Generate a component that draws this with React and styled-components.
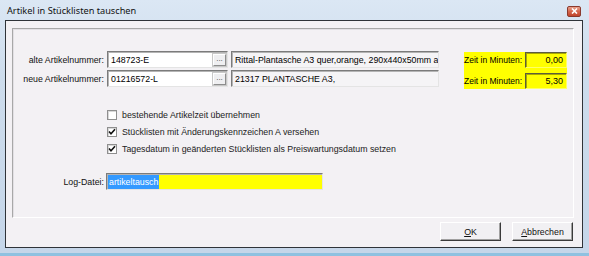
import styled, { createGlobalStyle } from "styled-components";

const GlobalStyle = createGlobalStyle`
  html, body {
    margin: 0;
    padding: 0;
    background: #c8d8ea;
  }
  * {
    box-sizing: border-box;
  }
`;

export default function App() {
  return (
    <Window>
      <GlobalStyle />
      <TitleBar>
        <Title>Artikel in Stücklisten tauschen</Title>
        <CloseButton>
          <svg width="7" height="6" viewBox="0 0 7 6">
            <path d="M1 0.5 L6 5.5 M6 0.5 L1 5.5" stroke="#fff" strokeWidth="1.6" />
          </svg>
        </CloseButton>
      </TitleBar>

      <Client>
        <Panel>
          <TopSection>
            <ArticleGrid>
              <Label>alte Artikelnummer:</Label>
              <EditField>
                <span>148723-E</span>
                <DotsButton>...</DotsButton>
              </EditField>
              <Description>Rittal-Plantasche A3 quer,orange, 290x440x50mm a</Description>

              <Label>neue Artikelnummer:</Label>
              <EditField>
                <span>01216572-L</span>
                <DotsButton>...</DotsButton>
              </EditField>
              <Description>21317 PLANTASCHE A3,</Description>
            </ArticleGrid>

            <TimeBox>
              <TimeRow>
                <span>Zeit in Minuten:</span>
                <TimeValue>0,00</TimeValue>
              </TimeRow>
              <TimeRow>
                <span>Zeit in Minuten:</span>
                <TimeValue>5,30</TimeValue>
              </TimeRow>
            </TimeBox>
          </TopSection>

          <CheckList>
            <CheckRow>
              <CheckBox />
              bestehende Artikelzeit übernehmen
            </CheckRow>
            <CheckRow>
              <CheckBox>
                <CheckMark />
              </CheckBox>
              Stücklisten mit Änderungskennzeichen A versehen
            </CheckRow>
            <CheckRow>
              <CheckBox>
                <CheckMark />
              </CheckBox>
              Tagesdatum in geänderten Stücklisten als Preiswartungsdatum setzen
            </CheckRow>
          </CheckList>

          <LogRow>
            <Label>Log-Datei:</Label>
            <LogField>
              <Selected>artikeltausch</Selected>
            </LogField>
          </LogRow>
        </Panel>

        <Footer>
          <DialogButton>
            <u>O</u>K
          </DialogButton>
          <DialogButton>
            <u>A</u>bbrechen
          </DialogButton>
        </Footer>
      </Client>
    </Window>
  );
}

function CheckMark() {
  return (
    <svg width="8" height="8" viewBox="0 0 8 8">
      <path d="M1 3.5 L3 5.8 L7 1.2" stroke="#111" strokeWidth="1.6" fill="none" />
    </svg>
  );
}

const Window = styled.div`
  width: 589px;
  height: 256px;
  display: flex;
  flex-direction: column;
  padding: 0 6px 5px 5px;
  background: linear-gradient(180deg, #dbe7f4 0%, #cddcec 30%, #c5d6e9 100%);
  border-bottom: 3px solid #8fc1e0;
  font-family: "Liberation Sans", Arial, sans-serif;
  font-size: 8.8px;
  color: #000;
`;

const TitleBar = styled.div`
  height: 20px;
  display: flex;
  align-items: center;
  justify-content: space-between;
  padding-left: 2px;
`;

const Title = styled.div`
  font-family: "Noto Sans", "Liberation Sans", sans-serif;
  font-size: 9.2px;
  color: #111;
  padding-top: 1px;
`;

const CloseButton = styled.div`
  width: 14px;
  height: 11px;
  margin-right: 2px;
  margin-top: 2px;
  display: flex;
  align-items: center;
  justify-content: center;
  border: 1px solid #8a3a2e;
  border-radius: 2px;
  background: linear-gradient(180deg, #e8a08c 0%, #d5664c 50%, #c1452c 100%);
`;

const Client = styled.div`
  flex: 1;
  display: flex;
  flex-direction: column;
  border: 1px solid #2f3338;
  background: #f3f1f4;
`;

const Panel = styled.div`
  height: 190px;
  margin: 7px 8px 0 6px;
  border-style: solid;
  border-width: 1px;
  border-color: #a8a8a8 #ffffff #ffffff #a8a8a8;
  box-shadow: inset 1px 1px 0 #e2e0e4;
  padding-top: 22px;
  display: flex;
  flex-direction: column;
`;

const TopSection = styled.div`
  display: flex;
  align-items: flex-start;
`;

const ArticleGrid = styled.div`
  display: grid;
  grid-template-columns: 92px 121px 209px;
  grid-auto-rows: 17px;
  column-gap: 2px;
  row-gap: 2px;
  align-items: center;
`;

const Label = styled.div`
  text-align: right;
  padding-right: 1px;
  white-space: nowrap;
  color: #111;
`;

const sunken = `
  border-style: solid;
  border-width: 1px;
  border-color: #7b7b7b #e4e4e4 #e4e4e4 #7b7b7b;
  box-shadow: inset 1px 1px 0 #b4b4b4;
`;

const EditField = styled.div`
  ${sunken}
  height: 17px;
  background: #fff;
  display: flex;
  align-items: center;
  justify-content: space-between;
  padding: 0 1px 0 3px;
`;

const DotsButton = styled.div`
  width: 13px;
  height: 12px;
  margin-top: 1px;
  display: flex;
  align-items: center;
  justify-content: center;
  line-height: 1;
  padding-bottom: 2px;
  color: #444;
  font-size: 8px;
  background: #efeff1;
  border-style: solid;
  border-width: 1px;
  border-color: #ffffff #8d8d8d #8d8d8d #ffffff;
  box-shadow: 0 0 0 1px #c8c8c8;
`;

const Description = styled.div`
  ${sunken}
  height: 17px;
  margin-left: 1px;
  background: #f5f4f6;
  padding: 0 0 0 3px;
  display: flex;
  align-items: center;
  white-space: nowrap;
  overflow: hidden;
`;

const TimeBox = styled.div`
  width: 103px;
  height: 37px;
  margin-left: 25px;
  margin-top: 1px;
  background: #ffff00;
  display: flex;
  flex-direction: column;
  justify-content: space-between;
`;

const TimeRow = styled.div`
  display: flex;
  align-items: center;
  justify-content: space-between;
  height: 16px;
  font-size: 8.5px;
  white-space: nowrap;
`;

const TimeValue = styled.div`
  width: 42px;
  height: 16px;
  display: flex;
  align-items: center;
  justify-content: flex-end;
  padding-right: 3px;
  border-style: solid;
  border-width: 1px;
  border-color: #5c5c40 #ffff66 #ffff66 #5c5c40;
  box-shadow: inset 1px 1px 0 #a8a800;
  font-size: 9px;
`;

const CheckList = styled.div`
  display: flex;
  flex-direction: column;
  margin-top: 17px;
  padding-left: 94px;
`;

const CheckRow = styled.div`
  height: 17px;
  display: flex;
  align-items: center;
  gap: 5px;
  color: #222;
  white-space: nowrap;
`;

const CheckBox = styled.div`
  width: 10px;
  height: 10px;
  background: #fff;
  border: 1px solid #8f8f8f;
  display: flex;
  align-items: center;
  justify-content: center;
  box-shadow: inset 1px 1px 0 #d8d8d8;
`;

const LogRow = styled.div`
  display: grid;
  grid-template-columns: 92px 217px;
  column-gap: 1px;
  align-items: center;
  margin-top: 16px;
`;

const LogField = styled.div`
  ${sunken}
  height: 17px;
  background: #ffff00;
  display: flex;
  align-items: center;
  padding-left: 1px;
`;

const Selected = styled.span`
  background: #3399ff;
  color: #fff;
  padding: 1px 1px;
  line-height: 12px;
`;

const Footer = styled.div`
  display: flex;
  justify-content: flex-end;
  gap: 11px;
  padding: 4px 9px 0 0;
`;

const DialogButton = styled.div`
  width: 61px;
  height: 19px;
  display: flex;
  align-items: center;
  justify-content: center;
  background: #f1f0f3;
  border-style: solid;
  border-width: 1px;
  border-color: #ffffff #3a3a3a #3a3a3a #ffffff;
  box-shadow: inset -1px -1px 0 #a0a0a0;
  color: #111;

  u {
    text-decoration: underline;
  }
`;
